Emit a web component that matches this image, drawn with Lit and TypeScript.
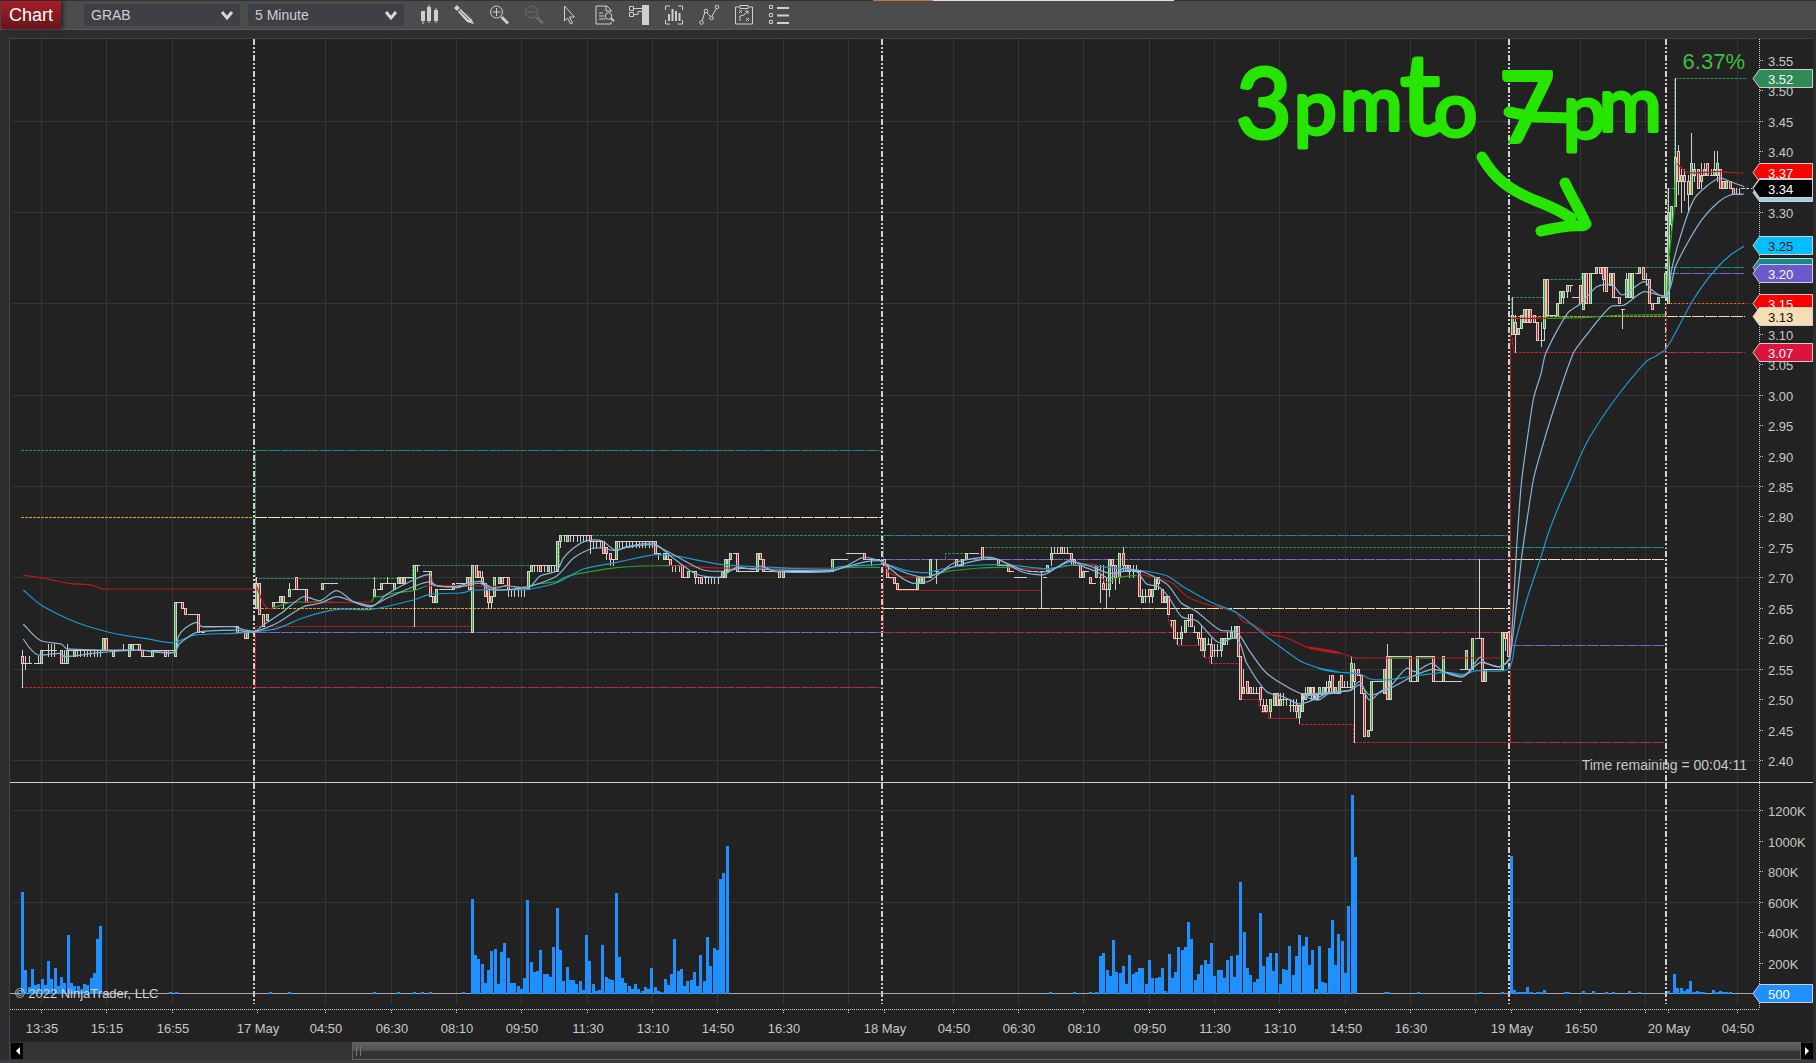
import { LitElement, html, svg, css } from "lit";
import { customElement } from "lit/decorators.js";

type Pt = [number, number];

/* ---------- scales ---------- */
const BAR = 3.267;
const priceY = (cents: number) => Math.round(760 - (cents - 240) * 6.09) + 0.5;
const GRID_X = [41, 106, 172, 325, 391, 456, 521, 587, 652, 717, 783, 848, 953, 1018, 1083, 1149, 1214, 1279, 1345, 1410, 1475, 1580, 1645, 1737];
const SESSIONS = [254, 882, 1509, 1666];

const TIMES: [number, string][] = [
  [41, "13:35"], [106, "15:15"], [172, "16:55"], [257, "17 May"], [325, "04:50"], [391, "06:30"], [456, "08:10"],
  [521, "09:50"], [587, "11:30"], [652, "13:10"], [717, "14:50"], [783, "16:30"], [848, ""], [884, "18 May"], [953, "04:50"],
  [1018, "06:30"], [1083, "08:10"], [1149, "09:50"], [1214, "11:30"], [1279, "13:10"], [1345, "14:50"], [1410, "16:30"],
  [1475, ""], [1511, "19 May"], [1580, "16:50"], [1645, ""], [1668, "20 May"], [1737, "04:50"],
];

/* ---------- candles: "x open close high low", x counted in thirds of a pixel from the block origin ---------- */
const BLOCKS: [number, number, string][] = [
  [0, 200, `67 57 56 58 52;77 56 56 57 55;87-96 56 56 57 56;106 56 56;115 56 56 57 56;124 56 58;133 58 58;145-172 58 58 59 57;
  184 58 56;193 56 56 58 56;202 56 58 59 56;212 58 58;223 57 58;233-302 58 58 58 57;311 58 60;320 60 58;330 58 58;340 57 58;
  350-362 58 58;371 58 58 59 58;380 58 58;388 57 59;398 58 59;407 59 59;417 59 58;427 58 57;437-448 57 57;457 57 58;467-487 58 58;
  496 58 57;506 58 58 58 57;516 58 58;526 57 66;536 66 66;547 66 65;557 65 64;567-588 64 64;596 64 61;606 61 61;612-702 62 62;
  712 62 61;722 61 61;735 61 60;743 60 61;752 61 61;
  770 65 69 70 65;779 69 64;790 64 62;802 63 64;811 65 65;820 65 66;829 66 66;841 66 67;850 67 66 67 65;859 66 66;868 67 68 69 67;
  879 68 68;889 70 68;899-910 68 68;919 68 66;929-958 66 66;967 68 69;977-1008 69 69;1124 67 68 70 67;1134 68 68;1145 68 69;
  1154 69 69;1163 69 69 70 69;1173 69 69;1184 68 69;1194 69 70;1203 70 69;1213 69 70;1223-1234 70 70;1243 68 72 72 62;
  1253-1262 72 72 72 71;1272-1282 71 71;1291 71 67;1300 67 66;1309 66 68;1320-1350 68 68;1361 68 69;1372 69 69`],
  [440, 200, `0-32 68 68;41 68 69;51-72 69 69;82 69 70;88 70 68;97 61 72;109 72 70;118 71 70;127 70 69 71 69;136 69 67;145 68 66 68 65;
  154 66 67 67 65;163 67 70;178 69 70;187 70 69;196 70 70;205 70 68 70 67;215-255 68 68 68 67;265 68 71;274 71 72;
  284-344 72 72 72 71;300 72 71;325 71 72;352 71 76;362 76 77 77 75;372-442 77 77 77 76;382 76 77;451 77 76 77 74;461-482 76 76 76 75;
  490 76 74;500 75 74 75 73;511 74 73 74 72;520 73 73 73 72;529 73 76;539-640 76 76 76 75;647 76 74;656-665 74 74 74 73;672 73 74;
  681 74 73;690 73 72;698-718 72 72 72 71;726 72 70;736 70 70;746 70 71;757 71 71;766 71 70 71 69;775 70 70 70 69;785 70 69;
  795-837 70 70 70 69;847 70 71;856 70 73;864 71 73;872 73 74;882 74 74;892 74 71;902-942 71 71;952 71 74;961 74 73;970 73 71;
  980-1010 71 71;1018 71 70;1030 70 71;1040-1168 71 71;1177 71 73;1187-1217 73 73;1223-1264 74 74;1273 74 73;1283 73 73;
  1293 73 73 73 72;1303-1318 73 73`],
  [880, 200, `12 73 72;21 72 70;32 70 70;43 70 69;52 69 68;62-102 68 68;112 68 70;121 69 70;131 69 70;141 70 70;151 70 73;169 71 71 73 69;
  229 73 72;238 72 72;247 72 73;259 73 74;270-299 74 74;308 75 73;318-346 73 73;355 73 72;365-375 72 72;385 72 71;395 71 71;
  405-437 70 70;447-476 71 71;484 71 71 71 65;493 70 70;502 71 72;514 73 74 75 72;523-565 74 74 75 74;543 75 74;574 74 73 74 72;583 73 72;
  592 72 72;601 72 70;610 70 71;620 71 71;631 70 69;641 69 69;650 70 72;661 70 70 72 66;670 69 68 72 68;680 68 68 70 65;688 68 73 73 67;
  697 73 72 73 69;706 72 70 72 68;718 70 74 74 69;730 74 72 75 71;740 72 71;749 72 71 72 70;759 71 71 72 70;769 71 71 72 71;778 71 67;
  788 66 67 68 66;797 67 67 68 66;808 68 67 68 66;817 67 68 68 66;826 68 70;835 70 69 70 68;847 68 66;856 66 67;865 67 64;874 63 63 63 62;883 63 60;
  893 60 60 61 59;904 60 61 62 59;916 61 63;925 63 63 64 62;934 64 62;943 61 61 62 61;955 61 60 61 59;964 60 58 62 58;973 58 60 60 57;
  984 59 59 60 59;994 59 57 60 56;1004-1014 58 58 59 57;1024 58 60 60 57;1033 59 60;1042 60 60 61 59;1053 60 61 62 60;1065 60 62;1074 62 57;
  1081 57 50;1090 51 52 55 51;1102 53 51;1112 52 51;1121-1131 51 51 52 51;1141 52 50 52 49;1150 49 48 50 48;1160 49 48 50 48;
  1171 48 50 50 47;1183 49 51;1192 51 49;1201 49 50 51 49;1210 50 50 51 49;1220 50 50 50 49;1230-1241 49 49 50 48;1250 49 48 50 47;
  1258 47 49 49 46;1268 49 51 51 48;1277 51 51 52 50;1288 51 52;1300 52 50;1309 50 51;1319 51 52;1329 51 52;1339 52 52 53 51;
  1348 52 53 54 51;1358 54 52;1368 51 51 52 51;1377 51 53`],
  [1300, 200, `6 48 50 51 48;15 50 51;25 51 52;36 52 50;46 50 50;56 50 50 51 50;66-76 51 51 52 51;86 52 52 53 51;97 54 51;106 51 52;
  115 51 51 53 51;124 54 52;134-146 52 52 53 52;154 52 56 57 52;163 55 53 56 43;175 55 54;184 54 51;193 51 44;205 44 45;214 45 53;
  224-244 53 53;253 51 55;262 57 50 59 50;271 50 57;281-321 57 57;331 57 53;341 53 53;352 53 57;362-392 57 57;400 57 53;
  410-421 53 53;430 53 57;440-480 53 53;485-495 55 55;500 55 58;509 55 55;518 55 60;528 60 60;538 60 60 73 60;547 60 53;556 53 55;
  566-600 55 55;608 55 61;617 61 60 61 58;626 61 57`],
  [1480, 300, `96 10 13 16 10;107 12 10 13 7;115 10 11;124 11 13 13 11;133 12 14;143 14 12;152 14 12;163 13 12;172 12 9;184 9 9 12 8;193 11 19 19 9;
  202 19 13;212-223 13 13;233 13 15 15 13;242 15 17;251 16 17 17 15;261 17 18 18 16;270 18 18 18 17;280-292 16 16;302 18 15;311 14 20;
  320 20 15;330 15 20;340 20 20;350 20 21;360 21 20 21 20;370 21 19 21 17;380 21 17;390 18 20;400 20 16;409 16 16;418 16 15;427 14 14 14 11;
  440 16 19 20 16;449 16 20;458 16 20;468 20 20;479 20 21;489 21 19;498 19 19 20 18;508 19 15;517 15 14;526 15 15;536 15 16;546 16 16;556 16 20;
  565 15 30 34 15;574 28 31 31 26;586 31 39 52 31;595 40 35 41 33;604 35 36 37 30;614 36 35 37 32;625 35 33 36 30;634 33 38 43 33;
  643 36 37 38 35;655 37 34;665 35 36 38 34;674 36 37 38 36;683 38 36;694 36 36 37 36;703 36 37 40 36;712 36 38 40 35;721 37 34;
  730 35 34;740 34 35;750 35 34;759 34 33;769-779 33 33 34 33;788 34 34`],
];

interface Candle { x: number; o: number; c: number; h: number; l: number }
const CANDLES: Candle[] = BLOCKS.flatMap(([x0, base, rows]) =>
  rows.split(";").flatMap((row) => {
    const [pos, o, c, h, l] = row.trim().split(/\s+/);
    const [a, b] = pos.split("-").map(Number);
    const out: Candle[] = [];
    const oo = +o + base, cc = +c + base;
    for (let p = a; p <= (b ?? a); p += BAR * 3) {
      out.push({
        x: Math.round(x0 + p / 3 - 1.5), o: oo, c: cc,
        h: h ? +h + base : Math.max(oo, cc), l: l ? +l + base : Math.min(oo, cc),
      });
    }
    return out;
  }));

/* ---------- volume runs: start x, then one height for each bar ---------- */
const VOLUME: [number, string][] = [
  [22.5, "101 23 6 24 8 9 14 8 32 14 25 7 16 10 58 10 7 7 3 9 8 15 20 54 67"],
  [170, "1 0 1"], [270, "1"], [289, "1"], [374, "1"], [398, "1"], [414, "1"], [422, "1"], [430, "1"], [463, "1"],
  [472.3, "94 38 34 29 10 23 42 44 9 41 50 35 10 10 7 4 15 93 31 21 22 43 19 19 16 46 85 43 12 26 13 13 9 12 3 58 32 9 2 3 48 16 14 13 100 36 15 10 7 4 9 4 2 6 4 25 6 2 1 14 8 19 54 22 24 7 12 13 21 7 38 12 56 27 45 43 114 120 147"],
  [1050, "1"], [1074, "1"], [1090, "1"], [1096, "1"],
  [1100.5, "37 40 23 17 53 21 20 27 9 38 19 21 25 25 9 33 15 15 16 25 2 39 15 21 46 43 46 71 54 13 19 28 33 29 50 17 23 23 15 33 37 16 38 111 61 25 18 11 14 80 27 36 40 22 40 9 24 23 47 18 37 58 47 56 28 43 4 47 11 10 45 73 28 59 52 20 87 198 136"],
  [1385, "1 1"], [1418, "1"], [1480, "1"], [1502, "1"],
  [1511.5, "137 3 1 1 1 6 1 0 1 1 3"], [1565, "1 1"], [1583, "2"], [1593, "2"], [1606, "1"], [1613, "1"], [1629, "2"], [1639, "1"],
  [1668, "2 0 19 5 5 2 4 12 1 2 1 1 0 0 3 1 2 1 1 1"],
];

/* ---------- indicator lines ---------- */
type Frame = "a" | "b" | "c" | "d" | "e" | "z";
const FRAMES: Record<Frame, [number, number, number]> = {
  a: [0, 430, 3], b: [440, 430, 3], c: [880, 430, 3], d: [1300, 480, 3], e: [1480, 30, 3], z: [1200, 40, 2.545],
};
const points = (src: string): Pt[] => {
  let f: Frame = "a";
  return src.trim().split(/\s+/).flatMap((t): Pt[] => {
    if (t in FRAMES) { f = t as Frame; return []; }
    const [x, y] = t.split(",").map(Number);
    const [ox, oy, sx] = FRAMES[f];
    return [[ox + x / sx, oy + y / 3]];
  });
};
const trace = (src: string) => points(src).map(([x, y]) => `${x.toFixed(1)},${y.toFixed(1)}`).join(" ");

/* A curve through every point; each handle follows the neighbours' direction and is a quarter of its own segment long. */
const curve = (src: string): string => {
  const p = points(src);
  const tangent = (i: number): Pt => {
    const a = p[i - 1] ?? p[i], b = p[i + 1] ?? p[i];
    const len = Math.hypot(b[0] - a[0], b[1] - a[1]) || 1;
    return [(b[0] - a[0]) / len, (b[1] - a[1]) / len];
  };
  return p.map(([x, y], i) => {
    if (i === 0) return `M${x.toFixed(1)} ${y.toFixed(1)}`;
    const a = p[i - 1], s = tangent(i - 1), e = tangent(i);
    const h = Math.min(Math.hypot(x - a[0], y - a[1]) / 4, 12);
    return `C${[a[0] + s[0] * h, a[1] + s[1] * h, x - e[0] * h, y - e[1] * h, x, y].map((v) => v.toFixed(1)).join(" ")}`;
  }).join("");
};

const RED = "#b71c1c", GREEN = "#2ca02c", PALE = "#8ab6d6", SKY = "#1c9ad0";
const AVERAGES: [string, string][] = [
  [RED, "a 70,436 120,443 165,452 215,461 265,464 290,470 305,477 330,477 762,477"],
  [RED, "a 770,470 790,520 805,536 825,532"],
  [GREEN, "a 825,532 868,518 900,516 1010,517"],
  [RED, "a 915,516 960,518 1115,516"],
  [GREEN, "a 1115,516 1122,502 1145,499 1180,490 1240,482 1280,467"],
  [RED, "a 1280,467 1380,467 b 60,468 265,470"],
  [GREEN, "b 265,470 300,461 350,455 375,441 450,425 530,413 600,408 690,407"],
  [RED, "b 690,407 740,408 830,414 1180,414"],
  [GREEN, "b 1180,414 1240,412 1320,412"],
  [RED, "c 10,393 30,430 70,441 110,441 150,438"],
  [GREEN, "c 150,438 200,425 300,414 390,412"],
  [RED, "c 390,412 440,416 500,418"],
  [GREEN, "c 500,418 520,415 580,404"],
  [RED, "c 580,404 650,406 670,450 685,460"],
  [GREEN, "c 685,460 710,444 770,436"],
  [RED, "c 775,432 860,452 880,461 925,502 990,526 1065,545 1090,575 1120,584 1165,612 1220,624 1290,655 1380,668 d 15,500 90,513 130,522 165,534 190,534 600,534"],
  [GREEN, "d 271,534 330,534"], [GREEN, "d 360,534 396,534"],
  [RED, "e 94,865 200,865"],
  [GREEN, "e 200,865 300,863 380,858 450,855 556,854"],
  [GREEN, "e 562,800 566,700 575,605 582,540 587,400"],
  [RED, "e 592,400 605,415 625,428 660,428 715,424 740,427 792,429"],
  [SKY, "a 70,480 120,523 200,565 260,588 350,612 440,626 520,638 580,616 700,610 765,605 830,596 910,563 1010,538 1115,538 1240,510 1290,493 1380,489 b 70,488 100,480 260,478 350,458 430,417 530,397 600,382 650,374 720,380 840,403 1000,412 1170,418 1200,410 1320,403 c 12,400 80,422 140,428 200,414 300,405 390,405 500,416 580,405 770,420 860,437 910,470 1000,520 1070,548 1150,612 1260,692 1330,718 1380,727 d 60,566 100,575 180,582 210,597 270,599 340,588 440,577 490,583 530,572 625,567 645,490 680,360 720,240 745,160 782,65 811,0 840,-70 870,-130 z 1055,1080 1135,965 1160,948 1187,925 1250,790 1285,728 1320,678 1350,645 1385,618"],
  [PALE, "a 70,583 120,631 185,643 200,656 300,660 415,660 520,667 540,640 590,607 710,600 735,605 765,605 830,580 910,530 960,520 1010,500 1060,515 1115,527 1160,505 1240,470 1290,455 1310,467 1380,470 b 120,460 160,480 265,470 350,438 400,385 450,358 485,354 525,362 560,352 640,345 720,385 790,420 860,423 900,415 1010,420 1170,422 1220,410 1280,395 1320,392 c 12,400 80,430 140,442 220,410 310,388 355,390 430,420 500,425 570,395 620,405 690,430 770,420 860,462 905,520 950,545 1020,600 1070,607 1110,665 1160,730 1260,790 1310,792 1380,788 d 15,645 150,632 180,615 210,645 270,625 340,588 400,568 490,588 540,548 600,560 630,535 665,230 700,0 730,-110 z 908,1080 950,940 980,890 1045,800 1080,795 1130,755 1187,765 1210,680 1245,600 1280,535 1320,485 1350,465 1385,462"],
  [PALE, "a 70,627 90,655 115,675 180,670 195,680 300,668 420,660 525,667 535,620 555,595 590,577 605,590 700,590 735,600 765,603 790,585 850,545 910,500 960,512 1010,482 1060,515 1115,530 1160,493 1240,450 1290,434 1300,465 1380,472 b 40,472 120,454 160,475 200,467 265,474 300,438 350,422 370,385 400,355 440,332 485,332 525,360 560,350 640,340 700,385 770,433 840,441 890,412 940,418 960,408 1010,425 1170,425 1220,408 1270,382 1320,392 c 12,400 60,440 100,460 150,452 220,400 310,382 355,388 430,427 495,433 570,390 610,410 650,425 690,445 730,415 770,425 800,462 835,470 865,500 905,560 950,572 1015,637 1070,625 1100,700 1160,785 1210,800 1258,822 1310,805 1345,788 1380,788 d 20,648 55,660 90,638 150,630 180,605 208,660 240,635 270,620 320,565 345,575 395,550 430,575 490,590 540,532 555,548 600,560 630,530 650,200 665,0 z 848,1080 868,1000 880,940 935,820 970,790 1010,740 1050,735 1075,765 1130,725 1150,750 1187,770 1200,690 1215,620 1245,510 1265,465 1320,415 1350,425 1385,440"],
];

/* level lines: colour, dash, points */
const SHORT = "3 1", LONG = "12 1";
const SEA = "#2e8b57", TEAL = "#148a8a", ORANGE = "#d8a02c", WHEAT = "#f5e2a8", CRIMSON = "#b8284a", SLATE = "#7468c8", LOW = "#c62020";
const LEVELS: [string, string, string][] = [
  [SEA, SHORT, "a 63,61 762,61"], [TEAL, LONG, "a 765,61 b 1327,61"],
  [ORANGE, SHORT, "a 63,262 762,262"], [WHEAT, LONG, "a 765,262 b 1327,262"],
  [LOW, SHORT, "a 63,772 762,772"], [CRIMSON, LONG, "a 765,772 b 1327,772"],
  [SLATE, LONG, "a 765,607 b 1327,607"], [CRIMSON, LONG, "c 6,607 1887,607"],
  [SEA, SHORT, "a 766,61 766,445 1238,445 1238,406 b 358,406 358,316 1327,316"],
  [TEAL, LONG, "c 6,316 1887,316"],
  [ORANGE, SHORT, "a 766,445 766,535 b 1327,535"], [WHEAT, LONG, "c 6,535 1887,535"],
  [LOW, SHORT, "a 766,772 766,590 b 97,590 97,606"],
  [SLATE, LONG, "c 6,388 1887,388"],
  [LOW, SHORT, "c 10,606 10,388 28,444 43,444 52,481 484,481 484,535"],
  [SEA, SHORT, "c 10,316 10,388"],
  [SEA, SHORT, "c 196,388 196,371 305,371 305,352 1887,352"],
  [LOW, SHORT, "c 865,520 865,571 883,608 892,646 961,646 970,682 988,682 990,700 1078,700 1078,807 1135,807 1137,828 1147,848 1165,848 1165,865 1257,865 1257,883 1420,883 d 160,733 160,787 627,787"],
  [CRIMSON, LONG, "d 627,787 1100,787"], [SLATE, LONG, "d 627,496 1100,496"],
  [TEAL, LONG, "d 627,202 1100,202"], [WHEAT, LONG, "d 627,238 1100,238"],
  [LOW, "8 1", "d 631,787 631,-440"],
  [SEA, SHORT, "e 94,860 94,802 190,802 190,748 305,748 305,730 350,730 350,712 560,712"],
  [TEAL, LONG, "e 560,712 795,712"], [SLATE, LONG, "e 560,730 795,730"],
  [ORANGE, SHORT, "e 90,860 558,860"], [WHEAT, LONG, "e 558,860 795,860"],
  [LOW, SHORT, "e 94,912 103,968 558,968"], [CRIMSON, LONG, "e 558,968 795,968"],
  [LOW, SHORT, "e 560,968 560,820 800,820"], [ORANGE, "1 3", "e 560,820 800,820"],
  [SEA, SHORT, "e 562,712 562,475 583,475 583,146 797,146"],
];

const TAGS: [number, string, string, string][] = [
  [78, "3.52", "#2e8b57", "#fff"], [172, "3.37", "#ff0000", "#fff"], [187, "", "#9ecbe4", "#111"], [192, "", "#9ecbe4", "#111"],
  [188, "3.34", "#000", "#fff"], [245, "3.25", "#00bfff", "#111"], [267, "3.21", "#148a8a", "#fff"], [273, "3.20", "#6a5acd", "#fff"],
  [303, "3.15", "#ff0000", "#fff"], [316, "3.13", "#f5deb3", "#111"], [352, "3.07", "#dc143c", "#fff"],
];
/* scale labels that a tag covers */
const COVERED = [335, 325, 320, 315];

const tag = ([y, label, fill, ink]: [number, string, string, string]) => svg`
  <polygon points="1753,${y + 0.5} 1759.5,${y - 8.5} 1812.5,${y - 8.5} 1812.5,${y + 9.5} 1759.5,${y + 9.5}" fill=${fill} stroke="#d0d0d0"></polygon>
  ${label ? svg`<text class="axis" x="1768" y=${y + 6} fill=${ink}>${label}</text>` : null}`;

const separators = (y1: number, y2: number) => SESSIONS.map((x) => svg`
  <line x1=${x} x2=${x} y1=${y1} y2=${y2} stroke="#cfcfcf" stroke-width="2" stroke-dasharray="6 2 2 2 2 2"></line>`);

const chartText = css`
  :host { display: block; }
  svg { display: block; width: 100%; height: auto; overflow: visible; }
  text { font-family: "Liberation Sans", Arial, sans-serif; }
  .axis { font-size: 13px; }
  .crisp { shape-rendering: crispEdges; }
  .grid { stroke: #343436; }
  .rule { stroke: #cfcfcf; }
  .dots { stroke: #cfcfcf; stroke-dasharray: 1 1; }
  .soft { fill: #c8c8c8; }
`;

@customElement("price-pane")
class PricePane extends LitElement {
  static styles = [chartText, css`
    .avg { fill: none; stroke-width: 1.2; stroke-linejoin: round; }
    .level { fill: none; stroke-width: 1; }
    .change { font-size: 22px; fill: #3fbf3f; }
    .timer { font-size: 14px; }
    .note { fill: #26e600; stroke: #26e600; stroke-width: 4; stroke-linejoin: round; font-family: Lato, sans-serif; }
    .ink { fill: none; stroke: #26e600; stroke-width: 11; stroke-linecap: round; stroke-linejoin: round; }
    .n1 { font-size: 96px; }
    .n2 { font-size: 76px; }
    .n3 { font-size: 112px; }
  `];

  private candle(k: Candle) {
    const top = priceY(Math.max(k.o, k.c)), bottom = priceY(Math.min(k.o, k.c));
    const flat = k.o === k.c;
    const wick = k.h !== k.l
      ? svg`<rect x=${k.x + 1} y=${priceY(k.h) - 0.5} width="1" height=${priceY(k.l) - priceY(k.h) + 1} fill="#cfcfcf"></rect>` : null;
    return svg`${wick}
      <rect x=${k.x} y=${top - 0.5} width=${flat ? 4 : 3} height=${bottom - top + 1} fill="#d4d0cc"></rect>
      ${flat ? null : svg`<rect x=${k.x + 1} y=${top + 0.5} width="1" height=${bottom - top - 1} fill=${k.c > k.o ? "#2fb52f" : "#e01818"}></rect>`}`;
  }

  render() {
    const ticks = Array.from({ length: 24 }, (_, i) => 240 + i * 5);
    return html`<svg viewBox="10 39 1803 744" role="img" aria-label="GRAB 5 minute price">
      <g class="crisp grid">
        ${GRID_X.map((x) => svg`<line x1=${x + 0.5} x2=${x + 0.5} y1="39" y2="782"></line>`)}
        ${[345, 330, 315, 300, 285, 270, 255, 240].map((c) => svg`<line x1="12" x2="1759" y1=${priceY(c)} y2=${priceY(c)}></line>`)}
      </g>
      <g class="crisp">${separators(39, 782)}</g>
      <g class="crisp">${LEVELS.map(([color, dash, pts]) => svg`<polyline class="level" stroke=${color} stroke-dasharray=${dash} points=${trace(pts)}></polyline>`)}</g>
      <g class="crisp">${CANDLES.map((k) => this.candle(k))}</g>
      ${AVERAGES.map(([color, pts]) => svg`<path class="avg" stroke=${color} d=${curve(pts)}></path>`)}
      <line class="crisp rule" x1="1741" x2="1752" y1="188.5" y2="188.5" stroke-dasharray="3 2"></line>
      <text class="change" x="1745" y="69" text-anchor="end">6.37%</text>
      <text class="timer soft" x="1747" y="770" text-anchor="end">Time remaining = 00:04:11</text>
      <line class="crisp dots" x1="1759.5" x2="1759.5" y1="39" y2="782"></line>
      ${ticks.map((c) => svg`
        <line class="crisp dots" x1="1760" x2="1764" y1=${priceY(c)} y2=${priceY(c)}></line>
        ${COVERED.includes(c) ? null : svg`<text class="axis soft" x="1768" y=${priceY(c) + 5}>${(c / 100).toFixed(2)}</text>`}`)}
      ${TAGS.map(tag)}
      <text class="note"><tspan class="n1" x="1236" y="138">3</tspan><tspan class="n2" x="1294" y="134">p</tspan><tspan class="n2" x="1340" y="130">m</tspan><tspan class="n3" x="1400" y="134">t</tspan><tspan class="n2" x="1434" y="136">o</tspan></text>
      <text class="note"><tspan class="n1" x="1499" y="142">7</tspan><tspan class="n2" x="1563" y="138">p</tspan><tspan class="n2" x="1599" y="131">m</tspan></text>
      <path class="ink" d="M1509 112 L1534 117 L1572 118"></path>
      <path class="ink" d="M1482 157 C1494 178 1508 189 1534 200 C1550 206 1562 212 1571 218 M1565 183 C1571 196 1579 209 1586 224 C1584 227 1578 225 1570 226 C1560 227 1550 229 1541 231"></path>
      <line class="crisp rule" x1="10" x2="1813" y1="782.5" y2="782.5"></line>
    </svg>`;
  }
}

@customElement("volume-pane")
class VolumePane extends LitElement {
  static styles = [chartText];

  render() {
    const ticks: [number, string][] = [[810, "1200K"], [841, "1000K"], [871, "800K"], [902, "600K"], [932, "400K"], [963, "200K"]];
    return html`<svg viewBox="10 783 1803 226" role="img" aria-label="Volume">
      <g class="crisp grid">
        ${GRID_X.map((x) => svg`<line x1=${x + 0.5} x2=${x + 0.5} y1="783" y2="1005"></line>`)}
        ${[810, 902].map((y) => svg`<line x1="12" x2="1759" y1=${y + 0.5} y2=${y + 0.5}></line>`)}
      </g>
      <g class="crisp">${separators(783, 1004)}
        <line x1="10" x2="1759" y1="993.5" y2="993.5" stroke="#a8a8a8"></line>
        ${VOLUME.flatMap(([x0, run]) => run.split(" ").map(Number).map((h, i) => h
          ? svg`<rect x=${Math.round(x0 + i * BAR - 1.5)} y=${993 - h} width="3" height=${h + 1} fill="#1e90ff"></rect>` : null))}
      </g>
      <text class="axis" x="15" y="998" fill="#d4d4d4">© 2022 NinjaTrader, LLC</text>
      <line class="crisp dots" x1="1759.5" x2="1759.5" y1="783" y2="1009"></line>
      ${ticks.map(([y, label]) => svg`
        <line class="crisp dots" x1="1760" x2="1764" y1=${y + 0.5} y2=${y + 0.5}></line>
        <text class="axis soft" x="1768" y=${y + 6}>${label}</text>`)}
      ${tag([993, "500", "#1e90ff", "#fff"])}
    </svg>`;
  }
}

@customElement("time-axis")
class TimeAxis extends LitElement {
  static styles = [chartText];

  render() {
    return html`<svg viewBox="10 1009 1803 33" role="img" aria-label="Time axis">
      <line class="crisp dots" x1="10" x2="1760" y1="1009.5" y2="1009.5"></line>
      ${TIMES.map(([x, label]) => svg`
        <line class="crisp dots" x1=${x + 0.5} x2=${x + 0.5} y1="1010" y2="1014"></line>
        ${label ? svg`<text class="axis soft" x=${x + 1} y="1033" text-anchor="middle">${label}</text>` : null}`)}
    </svg>`;
  }
}

/* ---------- toolbar ---------- */
const ICONS: [string, unknown][] = [
  ["Chart style", svg`<path d="M2 6h4v10H2zM8 2h4v14H8zM15 5h4v11h-4z" fill="currentColor" stroke="none"/><path d="M4 16v3M10 0v18M17 3v15"/>`],
  ["Drawing tools", svg`<path d="M0 3 3 0l3 3-3 3z" fill="currentColor" stroke="none"/><path d="M4 7 7 4 17 13l3 6-7-2z" fill="currentColor" stroke="none"/><path d="M6 6 15 15M8 5 17 14" stroke="#4c4c4c" stroke-width=".8"/>`],
  ["Zoom in", svg`<circle cx="7.5" cy="7" r="6"/><path d="M7.5 3v8M3.5 7h8"/><path d="m12.5 12 6.5 6.5" stroke-width="3"/>`],
  ["Zoom out", svg`<circle cx="7.5" cy="7" r="6"/><path d="M3.5 7h8"/><path d="m12.5 12 6.5 6.5" stroke-width="3"/>`],
  ["Cursor", svg`<path d="M5.5 1v15l3-3 3 6 2-1-3-6h5z"/>`],
  ["Data box", svg`<path d="M17 7V5l-4-4H2v18h15v-2M12 1v5h5M5 8h4M5 11h5M5 14h6"/><circle cx="14.5" cy="11" r="3.3"/><path d="m17 13.5 3 2.5" stroke-width="2"/>`],
  ["Chart trader", svg`<path d="M13 0h7v20h-7z" fill="currentColor" stroke="none"/><path d="M.5 1.5h4v4h-4zM.5 7.5h4v4h-4zM5 3.5h8M5 9.5h4v-3h4"/>`],
  ["Strategies", svg`<path d="M6 1H1.5v4M14 1h4.5v4M6 19H1.5v-4M14 19h4.5v-4"/><path d="M4 9h2v7H4zM7.5 4h2v12h-2zM11 6h2v10h-2zM14.5 8h2v8h-2z" fill="currentColor" stroke="none"/>`],
  ["Indicators", svg`<path d="M3 16 6 7M8 8l4 4M13 11l4-7"/><circle cx="2.5" cy="17.5" r="1.8"/><circle cx="7" cy="6" r="1.8"/><circle cx="12.5" cy="13" r="1.8"/><circle cx="18" cy="2" r="1.8"/>`],
  ["Playbook", svg`<path d="M5 2H1.5v17h17V2H15M6 .5h8v3H6zM6 16v-5l4-1 4-4M11 6h3v3M5 5l3 3M8 5 5 8M12 13l3 3M15 13l-3 3"/>`],
  ["Properties", svg`<path d="M.5.5h3v3h-3zM.5 8.5h3v3h-3zM.5 15.5h3v3h-3z"/><path d="M8 3h12M8 10.5h12M8 18h12" stroke-width="2"/>`],
];

@customElement("chart-toolbar")
class ChartToolbar extends LitElement {
  static styles = css`
    :host { display: block; font-family: "Liberation Sans", Arial, sans-serif; background: #2d2d30; }
    .strip { display: flex; height: 1px; background: #333335; }
    .s1 { flex: 873; }
    .s2 { flex: 60; background: #c8743c; }
    .s3 { flex: 241; background: #e0e0e0; }
    .s4 { flex: 642; }
    .bar { display: flex; align-items: center; height: 28px; background: #4c4c4c; border-bottom: 1px solid #58585a; }
    .tab { height: 28px; margin: 0 23px 0 1px; padding: 0 8px; border: 0; color: #fff; font: 18px/26px "Liberation Sans", Arial, sans-serif;
      background: linear-gradient(#a81e26, #671519); box-shadow: 2px 0 4px #222; }
    .pick { position: relative; margin-right: 8px; width: 156px; }
    select { appearance: none; display: block; width: 100%; height: 22px; border: 0; border-radius: 0; padding: 0 28px 0 7px; background: #3f3f46;
      color: #cfcfcf; font: 14px/22px "Liberation Sans", Arial, sans-serif; }
    .chev { position: absolute; right: 6px; top: 6px; pointer-events: none; }
    .tools { display: flex; gap: 11px; margin-left: 5px; }
    .tool { width: 24px; height: 24px; padding: 2px; border: 0; background: none; color: #cfcfcf; }
    .tool:disabled { color: #6c6c6c; }
    .icon { display: block; fill: none; stroke: currentColor; overflow: visible; }
  `;

  private pick(name: string, options: string[]) {
    return html`<div class="pick">
      <select aria-label=${name}>${options.map((o) => html`<option>${o}</option>`)}</select>
      <svg class="chev" width="14" height="11" viewBox="0 0 14 11"><path d="M2 2l5 6 5-6" fill="none" stroke="#d8d8d8" stroke-width="3"/></svg>
    </div>`;
  }

  render() {
    return html`<div class="strip"><span class="s1"></span><span class="s2"></span><span class="s3"></span><span class="s4"></span></div>
      <div class="bar">
        <button class="tab">Chart</button>
        ${this.pick("Instrument", ["GRAB"])}${this.pick("Interval", ["5 Minute"])}
        <div class="tools">${ICONS.map(([name, art]) => html`<button class="tool" aria-label=${name} ?disabled=${name === "Zoom out"}>
          <svg class="icon" width="20" height="20" viewBox="0 0 20 20">${art}</svg></button>`)}</div>
      </div>`;
  }
}

@customElement("app-root")
class AppRoot extends LitElement {
  static styles = css`
    :host { display: block; background: #2d2d30; }
    .chart { margin: 8px 3px 0 9px; border-top: 1px solid #434346; border-left: 1px solid #434346; background: #222; }
    .scroll { display: flex; align-items: center; height: 18px; padding-left: 1px; background: #333; }
    .arrow { width: 12px; height: 16px; padding: 0; border: 0; background: #000; }
    .arrow svg { display: block; margin: auto; }
    .track { display: flex; flex: 1; height: 18px; }
    .before { flex: 330; }
    .thumb { flex: 1446; box-sizing: border-box; border: 1px solid #626262; border-top: 0; padding: 4px 3px; background: linear-gradient(#636363, #505050 50%, #343434 50%, #343434); }
    .grip { display: block; width: 3px; height: 10px; border: solid #777; border-width: 0 1px; }
    .foot { height: 3px; background: #3c3c40; }
  `;

  render() {
    return html`<chart-toolbar></chart-toolbar>
      <main class="chart">
        <price-pane></price-pane>
        <volume-pane></volume-pane>
        <time-axis></time-axis>
        <div class="scroll">
          <button class="arrow" aria-label="Scroll left"><svg width="5" height="8" viewBox="0 0 5 8"><path d="M5 0v8L1 4z" fill="#fff"/></svg></button>
          <div class="track"><span class="before"></span><div class="thumb"><span class="grip"></span></div></div>
          <button class="arrow" aria-label="Scroll right"><svg width="5" height="8" viewBox="0 0 5 8"><path d="M0 0v8l4-4z" fill="#fff"/></svg></button>
        </div>
      </main>
      <div class="foot"></div>`;
  }
}
